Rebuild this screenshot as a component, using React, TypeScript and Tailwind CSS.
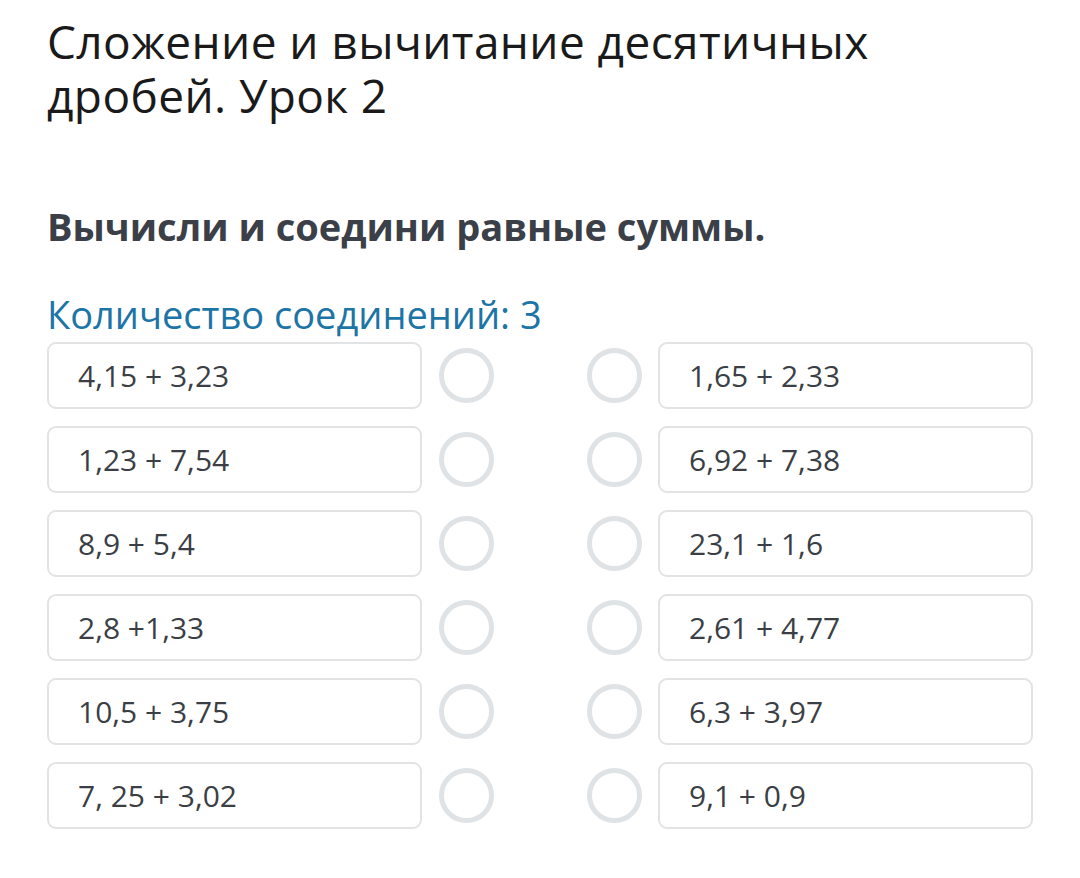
import React from 'react';

const left = ['4,15 + 3,23', '1,23 + 7,54', '8,9 + 5,4', '2,8 +1,33', '10,5 + 3,75', '7, 25 + 3,02'];
const right = ['1,65 + 2,33', '6,92 + 7,38', '23,1 + 1,6', '2,61 + 4,77', '6,3 + 3,97', '9,1 + 0,9'];

function Card({ text }: { text: string }) {
  return (
    <div className="w-[375px] h-[67px] shrink-0 rounded-[9px] border-2 border-[#e1e3e5] bg-white flex items-center pl-[29px] text-[30px] text-[#3b3f45]">
      {text}
    </div>
  );
}

function Dot() {
  return <div className="w-[55px] h-[55px] shrink-0 rounded-full border-[5px] border-[#dfe3e6]" />;
}

export default function App() {
  return (
    <div className="w-[1080px] h-[878px] bg-white pl-[47px] pt-[14px] font-['Open_Sans',sans-serif]">
      <h1 className="text-[46px] leading-[54px] tracking-[0.4px] text-[#1a1a1a] font-normal">
        Сложение и вычитание десятичных
        <br />
        дробей. Урок 2
      </h1>
      <h2 className="mt-[82px] text-[38px] leading-[44px] font-bold text-[#3b4048]">
        Вычисли и соедини равные суммы.
      </h2>
      <p className="mt-[44px] text-[38px] leading-[44px] text-[#1c75a6]">Количество соединений: 3</p>
      <div className="mt-[6px] flex flex-col gap-[17px]">
        {left.map((l, i) => (
          <div key={i} className="flex items-center">
            <Card text={l} />
            <div className="ml-[17px]">
              <Dot />
            </div>
            <div className="ml-[93px]">
              <Dot />
            </div>
            <div className="ml-[16px]">
              <Card text={right[i]} />
            </div>
          </div>
        ))}
      </div>
    </div>
  );
}
